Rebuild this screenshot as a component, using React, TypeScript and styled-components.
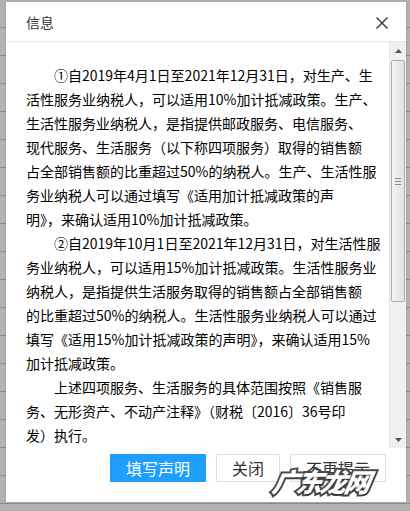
import React from 'react';
import styled, { createGlobalStyle } from 'styled-components';

const GlobalStyle = createGlobalStyle`
  html, body {
    margin: 0;
    padding: 0;
    width: 410px;
    height: 511px;
    overflow: hidden;
    font-family: "Noto Sans CJK SC", "Liberation Sans", sans-serif;
  }
`;

const Backdrop = styled.div`
  position: relative;
  width: 410px;
  height: 511px;
  box-sizing: border-box;
  padding: 2px 4px 9px 6px;
  background-color: #b3b3b3;
  background-image: repeating-linear-gradient(
    to bottom,
    transparent 0,
    transparent 27px,
    #8c8c8c 27px,
    #8c8c8c 28px
  );
`;

const Dialog = styled.div`
  width: 400px;
  height: 500px;
  background: #fff;
  display: flex;
  flex-direction: column;
  box-shadow: 0 0 2px rgba(0, 0, 0, 0.2);
`;

const TitleBar = styled.div`
  height: 39px;
  flex: none;
  display: flex;
  align-items: center;
  justify-content: space-between;
  padding: 0 17px 0 20px;
  border-bottom: 1px solid #e8e8e8;
  color: #333;
  font-size: 14px;
`;

const CloseButton = styled.button`
  border: 0;
  background: none;
  padding: 0;
  width: 14px;
  height: 14px;
  display: flex;
  cursor: pointer;
  margin-top: 3px;
`;

const Body = styled.div`
  height: 406px;
  flex: none;
  display: flex;
`;

const TextArea = styled.div`
  flex: 1;
  overflow: hidden;
  padding: 21px 0 0 20px;
  color: #000;
  font-size: 14px;
  line-height: 24px;
`;

const Line = styled.div<{ $indent?: boolean }>`
  white-space: nowrap;
  height: 24px;
  padding-left: ${p => (p.$indent ? '28px' : '0')};
`;

const ScrollBar = styled.div`
  width: 16px;
  flex: none;
  background: #f0f0f0;
  border-left: 1px solid #e4e4e4;
  display: flex;
  flex-direction: column;
`;

const Arrow = styled.div`
  height: 17px;
  flex: none;
  display: flex;
  align-items: center;
  justify-content: center;
`;

const Thumb = styled.div`
  height: 242px;
  flex: none;
  margin: 1px 1px 0 1px;
  border: 1px solid #adadad;
  border-radius: 2px;
  box-sizing: border-box;
  background: linear-gradient(to right, #f4f4f4, #e2e2e2);
  display: flex;
  align-items: center;
  justify-content: center;
`;

const Grip = styled.div`
  width: 6px;
  height: 5px;
  border-top: 1px solid #8a8a8a;
  border-bottom: 1px solid #8a8a8a;
  position: relative;
  &::after {
    content: '';
    position: absolute;
    left: 0;
    right: 0;
    top: 2px;
    border-top: 1px solid #8a8a8a;
  }
`;

const Track = styled.div`
  flex: 1;
`;

const Footer = styled.div`
  flex: 1;
  display: flex;
  justify-content: flex-end;
  align-items: flex-start;
  gap: 10px;
  padding: 6px 20px 0 0;
`;

const Button = styled.button<{ $primary?: boolean }>`
  height: 28px;
  padding: 0 15px;
  box-sizing: border-box;
  border: 1px solid ${p => (p.$primary ? '#1e9fff' : '#dedede')};
  background: ${p => (p.$primary ? '#1e9fff' : '#fff')};
  color: ${p => (p.$primary ? '#fff' : '#333')};
  font-family: "Noto Sans CJK SC", sans-serif;
  font-size: 16px;
  line-height: 26px;
  border-radius: 0;
  cursor: pointer;
`;

const Watermark = styled.div`
  position: absolute;
  left: 273px;
  top: 462px;
  font-family: "Noto Sans CJK SC", sans-serif;
  font-size: 26px;
  font-weight: 900;
  font-style: italic;
  letter-spacing: -2px;
  color: #fff;
  -webkit-text-stroke: 4px #4a4a4a;
  paint-order: stroke fill;
  text-shadow: 1px 1px 1px rgba(0, 0, 0, 0.4);
  transform: skewX(-10deg);
  pointer-events: none;
`;

const paragraphs: { text: string; indent?: boolean }[][] = [
  [
    { text: '①自2019年4月1日至2021年12月31日，对生产、生', indent: true },
    { text: '活性服务业纳税人，可以适用10%加计抵减政策。生产、' },
    { text: '生活性服务业纳税人，是指提供邮政服务、电信服务、' },
    { text: '现代服务、生活服务（以下称四项服务）取得的销售额' },
    { text: '占全部销售额的比重超过50%的纳税人。生产、生活性服' },
    { text: '务业纳税人可以通过填写《适用加计抵减政策的声' },
    { text: '明》，来确认适用10%加计抵减政策。' },
  ],
  [
    { text: '②自2019年10月1日至2021年12月31日，对生活性服', indent: true },
    { text: '务业纳税人，可以适用15%加计抵减政策。生活性服务业' },
    { text: '纳税人，是指提供生活服务取得的销售额占全部销售额' },
    { text: '的比重超过50%的纳税人。生活性服务业纳税人可以通过' },
    { text: '填写《适用15%加计抵减政策的声明》，来确认适用15%' },
    { text: '加计抵减政策。' },
  ],
  [
    { text: '上述四项服务、生活服务的具体范围按照《销售服', indent: true },
    { text: '务、无形资产、不动产注释》（财税〔2016〕36号印' },
    { text: '发）执行。' },
  ],
];

const CloseIcon = () => (
  <svg width="14" height="14" viewBox="0 0 14 14">
    <path d="M1.5 1.5 L12.5 12.5 M12.5 1.5 L1.5 12.5" stroke="#333" strokeWidth="1.4" fill="none" />
  </svg>
);

const Triangle = ({ down }: { down?: boolean }) => (
  <svg width="7" height="4" viewBox="0 0 7 4">
    <path d={down ? 'M0 0 L7 0 L3.5 4 Z' : 'M3.5 0 L7 4 L0 4 Z'} fill="#555" />
  </svg>
);

export default function App() {
  return (
    <Backdrop>
      <GlobalStyle />
      <Dialog>
        <TitleBar>
          <span>信息</span>
          <CloseButton aria-label="关闭">
            <CloseIcon />
          </CloseButton>
        </TitleBar>
        <Body>
          <TextArea>
            {paragraphs.flat().map((l, i) => (
              <Line key={i} $indent={l.indent}>
                {l.text}
              </Line>
            ))}
          </TextArea>
          <ScrollBar>
            <Arrow>
              <Triangle />
            </Arrow>
            <Thumb>
              <Grip />
            </Thumb>
            <Track />
            <Arrow>
              <Triangle down />
            </Arrow>
          </ScrollBar>
        </Body>
        <Footer>
          <Button $primary>填写声明</Button>
          <Button>关闭</Button>
          <Button>不再提示</Button>
        </Footer>
      </Dialog>
      <Watermark>广东龙网</Watermark>
    </Backdrop>
  );
}
